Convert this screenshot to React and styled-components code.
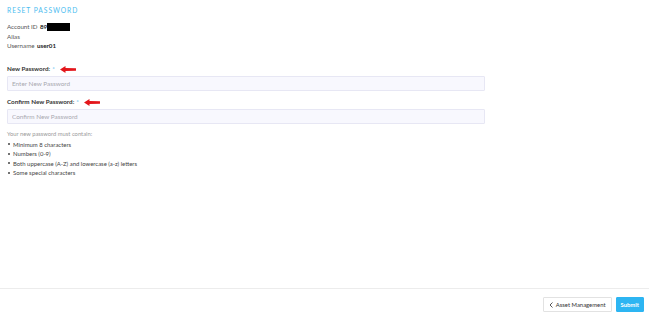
import React from "react";
import styled, { createGlobalStyle } from "styled-components";

const Global = createGlobalStyle`
  html, body { margin: 0; padding: 0; height: 100%; background: #fff; }
  body { font-family: Lato, "Open Sans", sans-serif; color: #333; }
  #root { height: 100%; }
  * { box-sizing: border-box; }
`;

const Page = styled.div`
  height: 313px;
  display: flex;
  flex-direction: column;
`;

const Main = styled.main`
  flex: 1;
  padding: 6px 7px 0 7px;
`;

const Title = styled.h1`
  margin: 0;
  font-size: 6.7px;
  line-height: 9px;
  font-weight: 400;
  letter-spacing: 0.95px;
  color: #4cbdf0;
  text-transform: uppercase;
`;

const InfoList = styled.div`
  margin-top: 7px;
  display: flex;
  flex-direction: column;
`;

const InfoRow = styled.div`
  font-size: 6.2px;
  line-height: 9.5px;
  color: #555;
  display: flex;
  align-items: center;
`;

const Value = styled.span`
  font-weight: 700;
  color: #1a1a1a;
  margin-left: 2.5px;
`;

const Redact = styled.span`
  display: inline-block;
  width: 23px;
  height: 8px;
  background: #000;
`;

const Field = styled.div`
  margin-top: ${(p) => p.$top}px;
`;

const Label = styled.label`
  display: flex;
  align-items: center;
  font-size: 6.3px;
  line-height: 9px;
  font-weight: 700;
  color: #333;
  height: 9px;
`;

const Star = styled.span`
  color: #4cbdf0;
  font-weight: 400;
  margin-left: 2px;
`;

const Arrow = styled.svg`
  margin-left: 5.5px;
  margin-top: 2px;
`;

const Input = styled.input`
  display: block;
  margin-top: 3px;
  width: 478px;
  height: 15px;
  border: 1px solid #e7e7f4;
  background: #f8f8fe;
  border-radius: 1px;
  padding: 0 4px;
  font-family: Lato, sans-serif;
  font-size: 6.4px;
  color: #333;
  outline: none;
  &::placeholder { color: #a8a8b0; }
`;

const Hint = styled.p`
  margin: 6px 0 0 0;
  font-size: 5.8px;
  line-height: 8px;
  color: #9a9a9a;
`;

const Rules = styled.ul`
  margin: 2px 0 0 0;
  padding: 0;
  list-style: none;
`;

const Rule = styled.li`
  font-size: 5.95px;
  line-height: 9.5px;
  color: #444;
  display: flex;
  align-items: center;
  &::before {
    content: "";
    width: 2px;
    height: 2px;
    border-radius: 50%;
    background: #444;
    margin: 0 3px 0 1px;
  }
`;

const Footer = styled.footer`
  height: 25px;
  border-top: 1px solid #ececec;
  display: flex;
  justify-content: flex-end;
  align-items: flex-start;
  padding: 8px 5px 0 0;
  gap: 4px;
`;

const Button = styled.button`
  height: 15px;
  padding: 0 ${(p) => (p.$primary ? 4 : 5)}px;
  font-family: Lato, sans-serif;
  font-size: 5.9px;
  font-weight: ${(p) => (p.$primary ? 700 : 400)};
  border-radius: 1px;
  border: 1px solid ${(p) => (p.$primary ? "#2db5f2" : "#e2e2e2")};
  background: ${(p) => (p.$primary ? "#2db5f2" : "#fff")};
  color: ${(p) => (p.$primary ? "#fff" : "#333")};
  display: flex;
  align-items: center;
  gap: 2px;
  cursor: pointer;
`;

const RedArrow = () => (
  <Arrow width="17" height="7" viewBox="0 0 17 7">
    <path d="M0 3.5 L5.5 0 L5.5 2 L16 2.3 L16 4.7 L5.5 5 L5.5 7 Z" fill="#e3161b" />
  </Arrow>
);

export default function App() {
  return (
    <>
      <Global />
      <Page>
        <Main>
          <Title>Reset Password</Title>
          <InfoList>
            <InfoRow>
              Account ID <Value>89</Value>
              <Redact />
            </InfoRow>
            <InfoRow>Alias</InfoRow>
            <InfoRow>
              Username <Value>user01</Value>
            </InfoRow>
          </InfoList>
          <Field $top={13}>
            <Label>
              New Password: <Star>*</Star>
              <RedArrow />
            </Label>
            <Input type="password" placeholder="Enter New Password" />
          </Field>
          <Field $top={6}>
            <Label>
              Confirm New Password: <Star>*</Star>
              <RedArrow />
            </Label>
            <Input type="password" placeholder="Confirm New Password" />
          </Field>
          <Hint>Your new password must contain:</Hint>
          <Rules>
            <Rule>Minimum 8 characters</Rule>
            <Rule>Numbers (0-9)</Rule>
            <Rule>Both uppercase (A-Z) and lowercase (a-z) letters</Rule>
            <Rule>Some special characters</Rule>
          </Rules>
        </Main>
        <Footer>
          <Button>
            <svg width="5" height="6" viewBox="0 0 5 6">
              <path d="M3.5 0.5 L1 3 L3.5 5.5" fill="none" stroke="#444" strokeWidth="0.9" />
            </svg>
            Asset Management
          </Button>
          <Button $primary>Submit</Button>
        </Footer>
      </Page>
    </>
  );
}
